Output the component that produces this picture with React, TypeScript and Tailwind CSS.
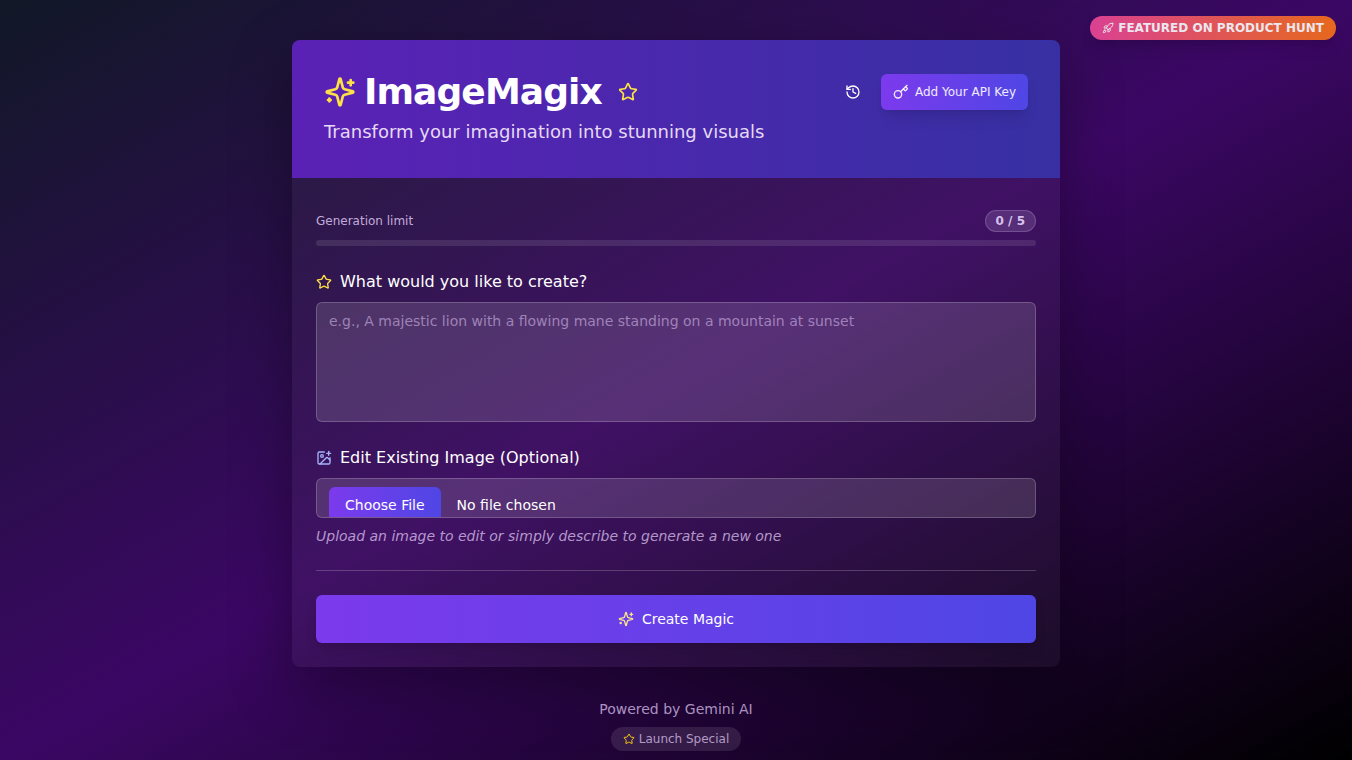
import { useState } from 'react';
import { History, ImagePlus, Key, Rocket, Star } from 'lucide-react';

const MAX_GENERATIONS = 5;

function Sparkles({ className }: { className?: string }) {
  return (
    <svg
      viewBox="0 0 24 24"
      fill="none"
      stroke="currentColor"
      strokeWidth="2"
      strokeLinecap="round"
      strokeLinejoin="round"
      className={className}
      aria-hidden="true"
    >
      <path d="M9.937 15.5A2 2 0 0 0 8.5 14.063l-6.135-1.582a.5.5 0 0 1 0-.962L8.5 9.936A2 2 0 0 0 9.937 8.5l1.582-6.135a.5.5 0 0 1 .963 0L14.063 8.5A2 2 0 0 0 15.5 9.937l6.135 1.581a.5.5 0 0 1 0 .964L15.5 14.063a2 2 0 0 0-1.437 1.437l-1.582 6.135a.5.5 0 0 1-.963 0z" />
      <path d="M20 3v4" />
      <path d="M22 5h-4" />
      <path d="M4 17v2" />
      <path d="M5 18H3" />
    </svg>
  );
}

export default function App() {
  const [prompt, setPrompt] = useState('');
  const [used] = useState(0);

  return (
    <div className="min-h-screen bg-[linear-gradient(to_bottom_right,#111827,#3b0764,#000000)] px-4 pt-10 pb-2 font-['DejaVu_Sans',sans-serif] text-white">
      <a
        href="#product-hunt"
        className="absolute top-4 right-4 flex h-6 items-center gap-1 rounded-full bg-[linear-gradient(to_right,#ec4899,#f97316)] px-3 text-xs font-bold opacity-90 shadow-lg"
      >
        <Rocket className="h-3 w-3" />
        FEATURED ON PRODUCT HUNT
      </a>

      <main className="mx-auto max-w-3xl">
        <div className="overflow-hidden rounded-lg bg-[#6b6b6b1a] shadow-[0_20px_60px_rgba(0,0,0,0.35)]">
          <header className="flex items-start justify-between bg-[linear-gradient(to_right,#5b21b6,#3730a3)] p-8">
            <div className="flex flex-col gap-1.5">
              <h1 className="flex items-center text-4xl font-bold tracking-tight">
                <Sparkles className="mr-2 h-8 w-8 text-[#fde047]" />
                ImageMagix
                <Star className="ml-4 h-5 w-5 text-[#fde047]" />
              </h1>
              <p className="text-lg leading-7 text-[#e5d9f5]">Transform your imagination into stunning visuals</p>
            </div>
            <div className="flex h-10 items-center gap-2">
              <button type="button" aria-label="History" className="flex h-10 w-10 items-center justify-center rounded-md">
                <History className="h-4 w-4" />
              </button>
              <button
                type="button"
                className="flex h-9 items-center rounded-md bg-[linear-gradient(to_right,#7c3aed,#4f46e5)] px-3 text-xs text-white/90 shadow-lg"
              >
                <Key className="mr-1.5 h-4 w-4" />
                Add Your API Key
              </button>
            </div>
          </header>

          <form className="flex flex-col gap-6 px-6 pt-8 pb-6" onSubmit={(e) => e.preventDefault()}>
            <div>
              <div className="mb-2 flex items-center justify-between text-xs">
                <span className="text-[#e9d5ff]/80">Generation limit</span>
                <span className="rounded-full border border-[#e9d5ff]/20 bg-[#e9d5ff]/15 px-2.5 py-0.5 font-bold text-[#e9d5ff]/90">
                  {used} / {MAX_GENERATIONS}
                </span>
              </div>
              <div className="h-1.5 overflow-hidden rounded-full bg-white/10">
                <div className="h-full bg-violet-500" style={{ width: `${(used / MAX_GENERATIONS) * 100}%` }} />
              </div>
            </div>

            <div className="flex flex-col gap-2">
              <label htmlFor="prompt" className="flex items-center gap-2 text-base">
                <Star className="h-4 w-4 text-[#fde047]" />
                What would you like to create?
              </label>
              <textarea
                id="prompt"
                value={prompt}
                onChange={(e) => setPrompt(e.target.value)}
                placeholder="e.g., A majestic lion with a flowing mane standing on a mountain at sunset"
                className="h-30 w-full resize-none rounded-md border border-white/20 bg-[#e5e5e5]/15 px-3 py-2 text-sm placeholder:text-[#e9d5ff]/50"
              />
            </div>

            <div className="flex flex-col gap-2">
              <label htmlFor="image" className="flex items-center gap-2 text-base">
                <ImagePlus className="h-4 w-4 text-[#a5b4fc]" />
                Edit Existing Image (Optional)
              </label>
              <input
                id="image"
                type="file"
                accept="image/*"
                className="h-10 w-full rounded-md border border-white/20 bg-[#e5e5e5]/15 px-3 py-2 text-sm file:mr-4 file:rounded-md file:bg-[linear-gradient(to_right,#7c3aed,#4f46e5)] file:px-4 file:py-2 file:text-sm file:text-white"
              />
              <p className="text-sm text-[#e9d5ff]/70 italic">
                Upload an image to edit or simply describe to generate a new one
              </p>
            </div>

            <hr className="border-white/20" />

            <button
              type="submit"
              className="flex h-12 w-full items-center justify-center gap-2 rounded-md bg-[linear-gradient(to_right,#7c3aed,#4f46e5)] text-sm shadow-lg"
            >
              <Sparkles className="h-4 w-4 text-[#fde68a]" />
              Create Magic
            </button>
          </form>
        </div>

        <footer className="mt-8 flex flex-col items-center gap-2">
          <p className="text-sm text-[#e9d5ff]/70">Powered by Gemini AI</p>
          <span className="flex h-6 items-center gap-1 rounded-full bg-white/10 px-3 text-xs text-[#e9d5ff]/70">
            <Star className="h-3 w-3 text-[#facc15]" />
            Launch Special
          </span>
        </footer>
      </main>
    </div>
  );
}
